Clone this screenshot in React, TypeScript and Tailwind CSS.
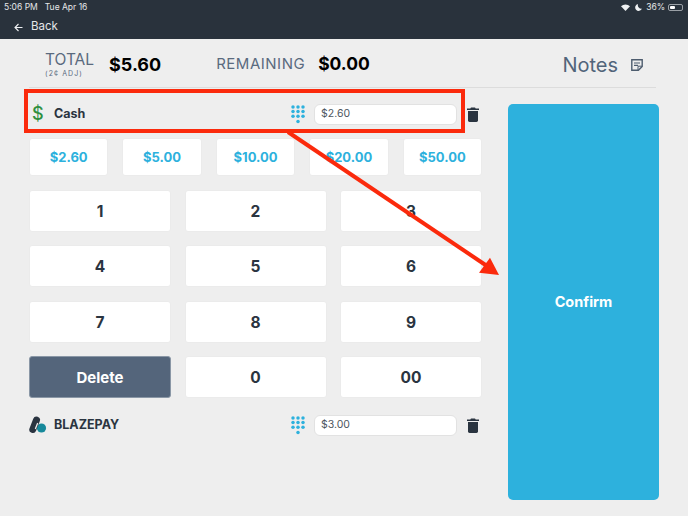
import React from "react";

function Keypad() {
  const dots: [number, number][] = [];
  for (let r = 0; r < 3; r++) for (let c = 0; c < 3; c++) dots.push([2 + c * 5, 2 + r * 4.6]);
  dots.push([7, 16.5]);
  return (
    <svg width="14" height="19" viewBox="0 0 14 19" className="shrink-0">
      {dots.map(([x, y], i) => (
        <circle key={i} cx={x} cy={y} r="1.75" fill="#2db1dd" />
      ))}
    </svg>
  );
}

function Trash() {
  return (
    <svg width="12" height="15" viewBox="0 0 12 15" className="shrink-0">
      <path d="M4 0.5h4l.7 1H12v1.5H0V1.5h3.3z" fill="#2a3440" />
      <path d="M1 4h10v9.2A1.6 1.6 0 0 1 9.4 15H2.6A1.6 1.6 0 0 1 1 13.2z" fill="#2a3440" />
    </svg>
  );
}

function AmountInput({ value }: { value: string }) {
  return (
    <div className="w-[143px] h-[21px] flex items-center pl-[6px] bg-white border border-[#e2e2e2] rounded-[6px] text-[10.5px] text-[#4d5660]">
      {value}
    </div>
  );
}

function PayRow({ icon, label, value, cls }: { icon: React.ReactNode; label: string; value: string; cls: string }) {
  return (
    <div className={`flex items-center ${cls}`}>
      <div className="w-[25px] flex items-center">{icon}</div>
      <span className="text-[12.5px] font-bold text-[#2a3440]">{label}</span>
      <div className="ml-auto flex items-center pr-[3px]">
        <Keypad />
        <div className="w-[9px]" />
        <AmountInput value={value} />
        <div className="w-[10px]" />
        <Trash />
      </div>
    </div>
  );
}

const quick = ["$2.60", "$5.00", "$10.00", "$20.00", "$50.00"];
const keys = ["1", "2", "3", "4", "5", "6", "7", "8", "9", "Delete", "0", "00"];

export default function App() {
  return (
    <div
      className="relative w-[688px] h-[516px] overflow-hidden bg-[#eeeeee]"
      style={{ fontFamily: "Inter, 'Liberation Sans', sans-serif" }}
    >
      <header className="h-[39px] bg-[#29323c] text-white flex flex-col">
        <div className="h-[13px] pt-[1px] px-[4px] flex items-center justify-between text-[8.5px] text-[#e4e6e8]">
          <div className="flex gap-[7px]">
            <span>5:06 PM</span>
            <span>Tue Apr 16</span>
          </div>
          <div className="flex items-center gap-[3px] pr-[1px]">
            <svg width="9" height="7" viewBox="0 0 9 7">
              <path d="M0 2.3A6.5 6.5 0 0 1 9 2.3L4.5 7z" fill="#eef0f2" />
            </svg>
            <svg width="7" height="7" viewBox="0 0 7 7" className="ml-[2px]">
              <path d="M3 0a3.5 3.5 0 1 0 4 4.6A3.6 3.6 0 0 1 3 0z" fill="#eef0f2" />
            </svg>
            <span className="ml-[1px]">36%</span>
            <div className="w-[15px] h-[7px] border border-[#9aa0a6] rounded-[2px] p-[1px]">
              <div className="w-[5px] h-full bg-white rounded-[1px]" />
            </div>
          </div>
        </div>
        <div className="flex-1 flex items-center pl-[14px] pt-[2px] text-[11.5px] text-[#e4e6e8]">
          <svg width="9" height="9" viewBox="0 0 9 9" fill="none" stroke="#eef0f2" strokeWidth="1.1">
            <path d="M8.5 4.5H1M4.5 1L1 4.5 4.5 8" />
          </svg>
          <span className="ml-[8px]">Back</span>
        </div>
      </header>

      <section className="ml-[29px] w-[627px] h-[49px] pt-[3px] border-b border-[#dcdcdc] flex items-center">
        <div className="ml-[16px] w-[64px] flex flex-col items-start text-[#5a6a7e]">
          <span className="text-[15.5px] leading-[16px]">TOTAL</span>
          <span className="mt-[2px] text-[7px] leading-[8px] tracking-[1.1px]">(2¢ ADJ)</span>
        </div>
        <span className="text-[18px] font-bold text-black">$5.60</span>
        <span className="ml-[55px] text-[15px] tracking-[0.5px] text-[#5a6a7e]">REMAINING</span>
        <span className="ml-[13px] text-[17.5px] font-bold text-black">$0.00</span>
        <span className="ml-auto text-[20px] text-[#51647a]">Notes</span>
        <svg width="12" height="12" viewBox="0 0 12 12" fill="none" stroke="#4d5c6e" strokeWidth="1.4" className="ml-[13px] mr-[13px]">
          <path d="M.8.8h10.4v6.6L7.4 11.2H.8z" />
          <path d="M3 4h6M3 6.4h4" strokeWidth="1.1" />
          <path d="M7 11V7.2h4" strokeWidth="1" />
        </svg>
      </section>

      <main className="flex pl-[29px] pr-[29px] pt-[16px]">
        <div className="w-[453px] flex flex-col">
          <PayRow
            cls="h-[20px] mb-[14px]"
            icon={<span className="ml-[3px] text-[18px] leading-none font-medium text-[#2f8f3e]">$</span>}
            label="Cash"
            value="$2.60"
          />
          <div className="flex gap-[14px] mb-[14px]">
            {quick.map((q) => (
              <button key={q} className="flex-1 h-[38px] pt-[1px] bg-white rounded-[3px] border border-[#ebebeb] text-[13px] font-bold text-[#2db1dd]">
                {q}
              </button>
            ))}
          </div>
          <div className="grid grid-cols-3 gap-x-[13.5px] gap-y-[13.4px]">
            {keys.map((k) =>
              k === "Delete" ? (
                <button key={k} className="h-[42px] pt-[2px] bg-[#54657b] rounded-[3px] border border-[#8a97a6] text-[15px] font-bold text-white">
                  {k}
                </button>
              ) : (
                <button key={k} className="h-[42px] pt-[1px] bg-white rounded-[3px] border border-[#ebebeb] text-[15.5px] font-bold text-[#2a3440]">
                  {k}
                </button>
              )
            )}
          </div>
          <PayRow
            cls="h-[21px] mt-[16.5px]"
            icon={
              <svg width="18" height="18" viewBox="0 0 18 18">
                <circle cx="12.5" cy="12" r="4.6" fill="#17899b" />
                <path d="M7.5 4 L3.8 13.5" stroke="#2a3440" strokeWidth="7" strokeLinecap="round" fill="none" />
                <path d="M8.5 7.5 L6.5 12.5" stroke="#eeeeee" strokeWidth="1.3" strokeLinecap="round" fill="none" />
              </svg>
            }
            label="BLAZEPAY"
            value="$3.00"
          />
        </div>
        <button className="ml-[26px] w-[151px] h-[396px] bg-[#2db1dd] rounded-[5px] text-[14.5px] font-bold text-white">
          Confirm
        </button>
      </main>

      <div className="absolute left-[24px] top-[89px] w-[441px] h-[44px] border-[4px] border-[#fb2a0c] pointer-events-none" />
      <svg className="absolute left-0 top-0 pointer-events-none" width="688" height="516" viewBox="0 0 688 516">
        <line x1="288" y1="132" x2="487" y2="266" stroke="#fb2a0c" strokeWidth="4" />
        <polygon points="499,275 479,272.7 490,257.7" fill="#fb2a0c" />
      </svg>
    </div>
  );
}
